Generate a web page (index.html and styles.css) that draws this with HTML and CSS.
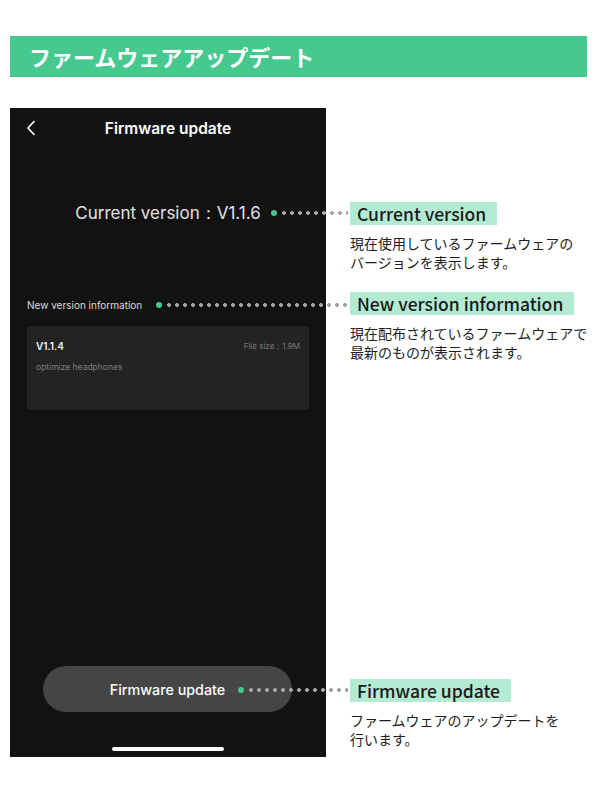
FILE: index.html
```html
<!DOCTYPE html>
<html lang="ja">
<head>
  <meta charset="UTF-8">
  <meta name="viewport" content="width=device-width, initial-scale=1">
  <title>ファームウェアアップデート</title>
  <link rel="stylesheet" href="styles.css">
</head>
<body>

  <!-- 見出し -->
  <h1 class="page-title">ファームウェアアップデート</h1>

  <div class="guide">
    <div class="phone"></div>

    <!-- ナビ -->
    <div class="nav">
      <svg class="back" width="10" height="16" viewBox="0 0 10 16">
        <polyline points="8,1.5 2,8 8,14.5" fill="none" stroke="#fff" stroke-width="1.6" stroke-linecap="round" stroke-linejoin="round"/>
      </svg>
      <div class="nav-title">Firmware update</div>
    </div>

    <!-- 現在のバージョン -->
    <div class="current">
      <span></span>
      <span class="current-text">Current version：V1.1.6</span>
      <span class="pointer"><i class="dot"></i><i class="line"></i></span>
    </div>
    <div class="note note-current">
      <div class="note-label">Current version</div>
      <p class="note-desc">現在使用しているファームウェアの<br>バージョンを表示します。</p>
    </div>

    <!-- 新しいバージョン -->
    <div class="newver">
      <div class="newver-head">
        <span class="newver-title">New version information</span>
        <span class="pointer"><i class="dot"></i><i class="line"></i></span>
      </div>
      <div class="card">
        <div class="card-top">
          <span class="card-ver">V1.1.4</span>
          <span class="card-size">File size：1.9M</span>
        </div>
        <div class="card-desc">optimize headphones</div>
      </div>
    </div>
    <div class="note note-new">
      <div class="note-label">New version information</div>
      <p class="note-desc">現在配布されているファームウェアで<br>最新のものが表示されます。</p>
    </div>

    <!-- 更新ボタン -->
    <div class="bottom">
      <div class="update-btn">
        <span class="btn-text">Firmware update</span>
        <span class="pointer btn-pointer"><i class="dot"></i><i class="line"></i></span>
      </div>
      <div class="home-bar"></div>
    </div>
    <div class="note note-update">
      <div class="note-label">Firmware update</div>
      <p class="note-desc">ファームウェアのアップデートを<br>行います。</p>
    </div>
  </div>

</body>
</html>
```

FILE: styles.css
```css
body { margin: 0; background: #fff; font-family: "Noto Sans CJK JP", "Noto Sans", sans-serif; }

.page-title {
  margin: 36px 13px 0 10px;
  height: 41px;
  padding-left: 19px;
  background: #45c98f;
  color: #fff;
  font-size: 22px;
  font-weight: 700;
  line-height: 41px;
}

/* 画面 + 注釈 */
.guide {
  display: grid;
  grid-template-columns: 316px 1fr;
  grid-template-rows: 42px 51px 70px 22px 117px 1fr 91px;
  height: 649px;
  margin: 31px 0 0 10px;
  font-family: Inter, "Liberation Sans", sans-serif;
}
.phone { grid-column: 1; grid-row: 1 / -1; background: #121212; }

.nav { grid-column: 1; grid-row: 1; display: flex; align-items: center; justify-content: center; position: relative; padding-bottom: 2px; }
.back { position: absolute; left: 16px; top: 12px; }
.nav-title { color: #fff; font-size: 15.5px; font-weight: 600; }

.pointer { display: flex; align-items: center; }
.dot { width: 6px; height: 6px; border-radius: 50%; background: #3fcb8c; flex: none; }
.line {
  flex: 1;
  height: 8px;
  margin-left: 3px;
  background: radial-gradient(circle, #a3a3a3 1.6px, transparent 2.2px) 0 50% / 8px 8px repeat-x;
}

.current {
  grid-column: 1; grid-row: 3;
  display: grid;
  grid-template-columns: 1fr auto 1fr;
  align-items: center;
  height: 24px;
  color: #e2e2e2;
  font-size: 17px;
}
.current .pointer { margin: 0 -22px 0 10px; }

.newver { grid-column: 1; grid-row: 5; padding: 0 17px; }
.newver-head { display: flex; align-items: center; height: 24px; color: #dcdcdc; font-size: 10px; }
.newver-head .pointer { flex: 1; margin: 0 -39px 0 14px; }

.card { height: 84px; margin-top: 9px; padding: 14px 9px; box-sizing: border-box; background: #232323; border-radius: 4px; }
.card-top { display: flex; justify-content: space-between; align-items: center; }
.card-ver { color: #f2f2f2; font-size: 10px; font-weight: 600; }
.card-size { color: #7a7a7a; font-size: 8px; }
.card-desc { margin-top: 10px; color: #7d7d7d; font-size: 8.5px; }

.bottom { grid-column: 1; grid-row: 7; display: flex; flex-direction: column; align-items: center; }
.update-btn {
  display: flex;
  align-items: center;
  justify-content: center;
  position: relative;
  width: 249px;
  height: 46px;
  margin-left: -1px;
  background: #454545;
  border-radius: 23px;
  color: #fff;
  font-size: 14.3px;
  font-weight: 500;
}
.btn-pointer { position: absolute; left: 195px; right: -56px; top: 20px; }
.home-bar { width: 112px; height: 4px; margin-top: 35px; background: #fff; border-radius: 2px; }

/* 注釈 */
.note { grid-column: 2; padding-left: 24px; }
.note-current { grid-row: 3; padding-top: 1px; }
.note-new { grid-row: 5; margin-top: -1px; }
.note-update { grid-row: 7; padding-top: 13px; }
.note-label {
  display: inline-block;
  padding: 0 11px 0 7px;
  background: #b3ead2;
  color: #1a1a1a;
  font-family: "Noto Sans CJK JP", sans-serif;
  font-size: 17.5px;
  font-weight: 500;
  line-height: 23px;
}
.note-desc {
  margin: 9px 0 0;
  color: #1e1e1e;
  font-family: "Noto Sans CJK JP", sans-serif;
  font-size: 14px;
  line-height: 19px;
}
```
